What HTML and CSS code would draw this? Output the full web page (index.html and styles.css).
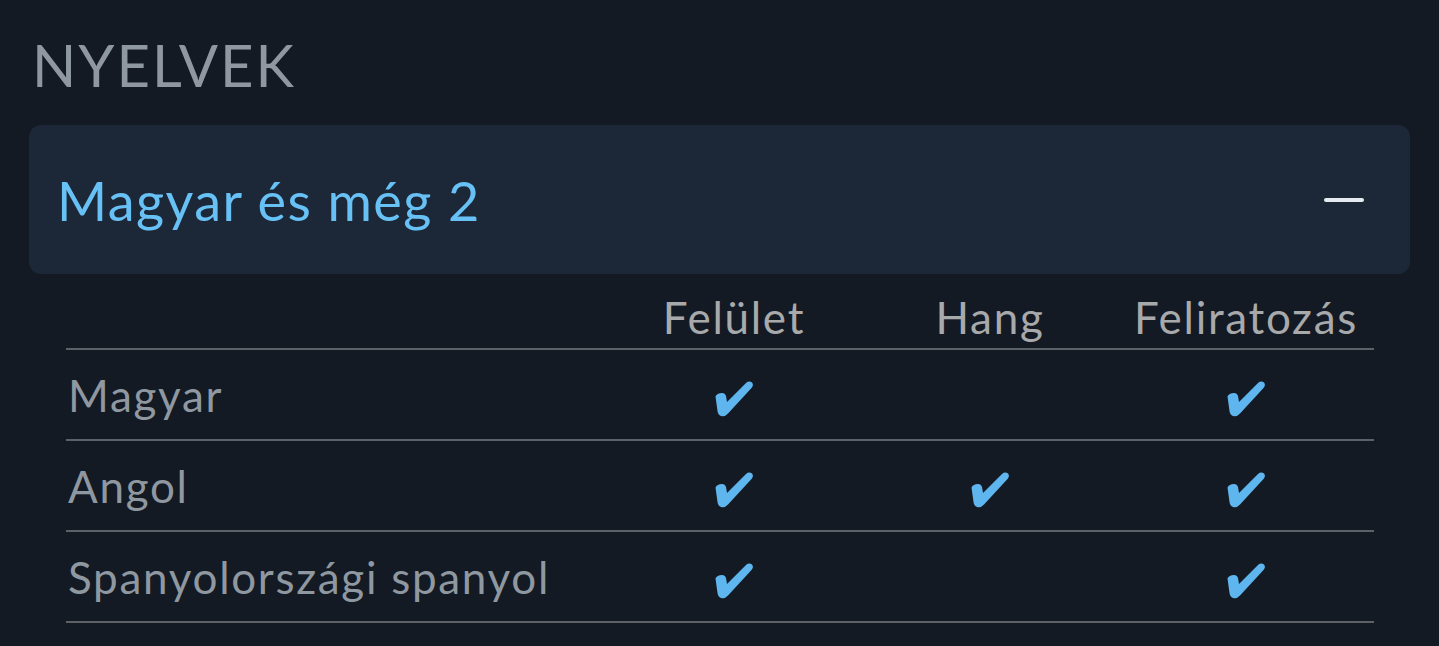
FILE: index.html
```html
<!DOCTYPE html>
<html lang="hu">
<head>
<meta charset="utf-8">
<link rel="stylesheet" href="styles.css">
</head>
<body>
<section class="languages">
  <h2 class="title">NYELVEK</h2>
  <div class="summary">
    <span class="summary-text">Magyar és még 2</span>
    <span class="minus"></span>
  </div>
  <table class="lang-table">
    <thead>
      <tr>
        <th class="name-col"></th>
        <th>Felület</th>
        <th>Hang</th>
        <th>Feliratozás</th>
      </tr>
    </thead>
    <tbody>
      <tr>
        <td class="name">Magyar</td>
        <td><svg class="check" viewBox="0 0 40 37"><path d="M1.5,16.5 Q3,13 8,13 Q11,13 12,16 L13,22 L32,3 Q35,0.5 38,2.5 Q40,5 37.5,8 L14,33.5 Q11,37 7,36 Q4,35 3.5,31 Z"/></svg></td>
        <td></td>
        <td><svg class="check" viewBox="0 0 40 37"><path d="M1.5,16.5 Q3,13 8,13 Q11,13 12,16 L13,22 L32,3 Q35,0.5 38,2.5 Q40,5 37.5,8 L14,33.5 Q11,37 7,36 Q4,35 3.5,31 Z"/></svg></td>
      </tr>
      <tr>
        <td class="name">Angol</td>
        <td><svg class="check" viewBox="0 0 40 37"><path d="M1.5,16.5 Q3,13 8,13 Q11,13 12,16 L13,22 L32,3 Q35,0.5 38,2.5 Q40,5 37.5,8 L14,33.5 Q11,37 7,36 Q4,35 3.5,31 Z"/></svg></td>
        <td><svg class="check" viewBox="0 0 40 37"><path d="M1.5,16.5 Q3,13 8,13 Q11,13 12,16 L13,22 L32,3 Q35,0.5 38,2.5 Q40,5 37.5,8 L14,33.5 Q11,37 7,36 Q4,35 3.5,31 Z"/></svg></td>
        <td><svg class="check" viewBox="0 0 40 37"><path d="M1.5,16.5 Q3,13 8,13 Q11,13 12,16 L13,22 L32,3 Q35,0.5 38,2.5 Q40,5 37.5,8 L14,33.5 Q11,37 7,36 Q4,35 3.5,31 Z"/></svg></td>
      </tr>
      <tr>
        <td class="name">Spanyolországi spanyol</td>
        <td><svg class="check" viewBox="0 0 40 37"><path d="M1.5,16.5 Q3,13 8,13 Q11,13 12,16 L13,22 L32,3 Q35,0.5 38,2.5 Q40,5 37.5,8 L14,33.5 Q11,37 7,36 Q4,35 3.5,31 Z"/></svg></td>
        <td></td>
        <td><svg class="check" viewBox="0 0 40 37"><path d="M1.5,16.5 Q3,13 8,13 Q11,13 12,16 L13,22 L32,3 Q35,0.5 38,2.5 Q40,5 37.5,8 L14,33.5 Q11,37 7,36 Q4,35 3.5,31 Z"/></svg></td>
      </tr>
    </tbody>
  </table>
</section>
</body>
</html>
```
FILE: styles.css
```css
html, body {
  margin: 0;
  padding: 0;
  background: #131a23;
}
body {
  font-family: "Lato", "Open Sans", sans-serif;
  width: 1439px;
  height: 646px;
  overflow: hidden;
}
.languages {
  padding: 0 29px;
}
.title {
  margin: 0;
  padding: 30px 0 0 3px;
  height: 125px;
  box-sizing: border-box;
  font-size: 58px;
  line-height: 70px;
  font-weight: 400;
  letter-spacing: 2px;
  color: #8f98a0;
}
.summary {
  height: 149px;
  background: #1c2738;
  border-radius: 12px;
  display: flex;
  align-items: center;
  justify-content: space-between;
  padding: 0 46px 0 28px;
}
.summary-text {
  font-size: 54px;
  color: #67c1f5;
  line-height: 1;
  letter-spacing: 1.4px;
  margin-top: 2px;
}
.minus {
  width: 40px;
  height: 4px;
  border-radius: 2px;
  background: #e6ebf1;
}
.lang-table {
  margin-left: 37px;
  width: 1308px;
  border-collapse: collapse;
  font-size: 44px;
  letter-spacing: 1.7px;
}
.lang-table th {
  font-weight: 400;
  color: #a8a9ab;
  height: 75px;
  padding: 0 0 5px;
  vertical-align: bottom;
  box-sizing: border-box;
  width: 256px;
  border-bottom: 2px solid #5d6066;
  text-align: center;
}
.lang-table th.name-col {
  width: auto;
}
.lang-table td {
  height: 89px;
  padding: 0;
  border-bottom: 2px solid #5d6066;
  text-align: center;
  vertical-align: middle;
}
.lang-table td.name {
  text-align: left;
  color: #8f98a0;
  padding-left: 2px;
}
.check {
  display: inline-block;
  vertical-align: middle;
  width: 40px;
  height: 37px;
  fill: #5fb6ef;
  margin-top: -4px;
}
```
